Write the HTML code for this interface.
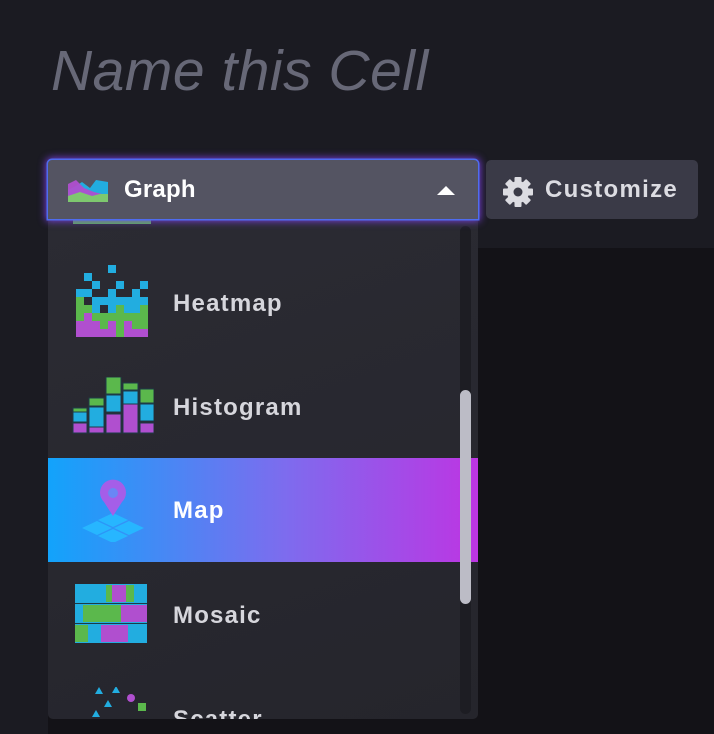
<!DOCTYPE html>
<html><head><style>
body{margin:0;width:714px;height:734px;background:#1b1b22;position:relative;overflow:hidden;font-family:"Liberation Sans",sans-serif}
.title{position:absolute;left:51px;top:38px;font-size:57px;font-style:italic;color:#676877;letter-spacing:0.5px}
.dark{position:absolute;left:48px;top:248px;right:0;bottom:0;background:#131217}
.btn{position:absolute;left:48px;top:160px;width:430px;height:59px;background:#545462;border-radius:4px 4px 0 0;box-shadow:0 0 0 1.5px #4f6cf0,0 0 8px 2px #7a3fe0;box-sizing:border-box}
.btn span{position:absolute;left:76px;top:16px;color:#fff;font-size:24px;font-weight:bold;letter-spacing:0.2px}
.menu{position:absolute;left:48px;top:219px;width:430px;height:500px;background:linear-gradient(160deg,#2b2b33,#25252c);border-radius:0 0 5px 5px;overflow:hidden}
.item{position:absolute;left:0;width:430px;height:104px}
.item span{position:absolute;left:125px;top:39px;color:#d6d6dc;font-size:24px;font-weight:bold;letter-spacing:1.2px}
.sel{background:linear-gradient(90deg,#12a3fb,#7d6cee 55%,#bd35e3)}
.sel span{color:#fff}
.track{position:absolute;left:412px;top:7px;width:11px;height:488px;background:#1d1d23;border-radius:6px}
.thumb{position:absolute;left:412px;top:171px;width:11px;height:214px;background:#bcbcc6;border-radius:6px}
.cust{position:absolute;left:486px;top:160px;width:212px;height:59px;background:#3a3a47;border-radius:5px}
.cust span{position:absolute;left:59px;top:16px;color:#dcdce2;font-size:24px;font-weight:bold;letter-spacing:1.3px}
</style></head><body>
<div class="title">Name this Cell</div>
<div class="dark"></div>
<div class="menu">
 <div style="position:absolute;left:25px;top:0;width:78px;height:5px;background:#5bb84c"></div>
 <div class="item" style="top:32px"><svg style="position:absolute;left:28px;top:14px" width="74" height="74" viewBox="0 0 74 74">
 <g fill="#22ade0"><rect x="32" y="0" width="8" height="8"/><rect x="8" y="8" width="8" height="8"/><rect x="16" y="16" width="8" height="8"/><rect x="40" y="16" width="8" height="8"/><rect x="64" y="16" width="8" height="8"/><rect x="0" y="24" width="16" height="8"/><rect x="32" y="24" width="8" height="8"/><rect x="56" y="24" width="8" height="8"/><rect x="16" y="32" width="48" height="16"/><rect x="64" y="32" width="8" height="8"/></g>
 <rect x="24" y="40" width="8" height="8" fill="#2b2b33"/>
 <g fill="#5bb84c"><rect x="0" y="32" width="8" height="24"/><rect x="8" y="40" width="8" height="8"/><rect x="16" y="48" width="56" height="8"/><rect x="64" y="40" width="8" height="8"/><rect x="40" y="40" width="8" height="32"/><rect x="24" y="56" width="8" height="8"/><rect x="56" y="56" width="16" height="8"/></g>
 <g fill="#b04fcf"><rect x="0" y="64" width="40" height="8"/><rect x="0" y="56" width="24" height="8"/><rect x="48" y="64" width="24" height="8"/><rect x="32" y="56" width="8" height="8"/><rect x="48" y="56" width="8" height="8"/><rect x="8" y="48" width="8" height="8"/></g></svg><span>Heatmap</span></div>
 <div class="item" style="top:136px"><svg style="position:absolute;left:24px;top:22px" width="82" height="60" viewBox="0 0 82 60">
 <g stroke="#1d3b47" stroke-width="1">
 <rect x="1" y="31" width="14" height="4" fill="#5bb84c"/><rect x="1" y="35" width="14" height="10" fill="#22ade0"/><rect x="1" y="46" width="14" height="10" fill="#b04fcf"/>
 <rect x="17" y="21" width="15" height="8" fill="#5bb84c"/><rect x="17" y="30" width="15" height="20" fill="#22ade0"/><rect x="17" y="50" width="15" height="6" fill="#b04fcf"/>
 <rect x="34" y="0" width="15" height="17" fill="#5bb84c"/><rect x="34" y="18" width="15" height="17" fill="#22ade0"/><rect x="34" y="37" width="15" height="19" fill="#b04fcf"/>
 <rect x="51" y="6" width="15" height="7" fill="#5bb84c"/><rect x="51" y="14" width="15" height="13" fill="#22ade0"/><rect x="51" y="27" width="15" height="29" fill="#b04fcf"/>
 <rect x="68" y="12" width="14" height="14" fill="#5bb84c"/><rect x="68" y="27" width="14" height="17" fill="#22ade0"/><rect x="68" y="46" width="14" height="10" fill="#b04fcf"/></g></svg><span>Histogram</span></div>
 <div class="item sel" style="top:239px"><svg style="position:absolute;left:30px;top:20px" width="70" height="64" viewBox="0 0 70 64">
 <g fill="#27b6ff"><polygon points="35,35 50,42 35,49 20,42"/><polygon points="19,43 34,50 19,57 4,50"/><polygon points="51,43 66,50 51,57 36,50"/><polygon points="35,51 50,58 35,65 20,58"/></g>
 <path d="M35 38 L26 24 A13 13 0 1 1 44 24 Z" fill="#a55ee8"/><circle cx="35" cy="15" r="5" fill="#6a86f5"/></svg><span>Map</span></div>
 <div class="item" style="top:344px"><svg style="position:absolute;left:27px;top:21px" width="72" height="60" viewBox="0 0 72 60">
 <rect x="0" y="0" width="72" height="19" fill="#22ade0"/><rect x="31" y="1" width="6" height="17" fill="#5bb84c"/><rect x="37" y="1" width="14" height="17" fill="#b04fcf"/><rect x="51" y="1" width="8" height="17" fill="#5bb84c"/>
 <rect x="0" y="20" width="72" height="19" fill="#22ade0"/><rect x="8" y="21" width="38" height="17" fill="#5bb84c"/><rect x="46" y="21" width="26" height="17" fill="#b04fcf"/>
 <rect x="0" y="40" width="72" height="19" fill="#22ade0"/><rect x="0" y="41" width="13" height="17" fill="#5bb84c"/><rect x="26" y="41" width="27" height="17" fill="#b04fcf"/>
 <g fill="#1d3b47"><rect x="0" y="19" width="72" height="1"/><rect x="0" y="39" width="72" height="1"/></g></svg><span>Mosaic</span></div>
 <div class="item" style="top:448px"><svg style="position:absolute;left:40px;top:20px" width="60" height="40" viewBox="0 0 60 40">
 <g fill="#22ade0"><polygon points="11,0 15,7 7,7"/><polygon points="28,-1 32,6 24,6"/><polygon points="20,13 24,20 16,20"/><polygon points="8,23 12,30 4,30"/></g>
 <circle cx="43" cy="11" r="4" fill="#b04fcf"/><rect x="50" y="16" width="8" height="8" fill="#5bb84c"/></svg><span>Scatter</span></div>
 <div class="track"></div><div class="thumb"></div>
</div>
<div class="btn"><svg style="position:absolute;left:20px;top:16px" width="40" height="28" viewBox="0 0 40 28">
 <polygon points="0,26 0,14 8,10 14,6 22,12 28,4 40,6 40,26" fill="#22ade0"/>
 <polygon points="0,26 0,8 8,4 16,12 26,16 34,18 40,18 40,26" fill="#b04fcf" opacity="0.95"/>
 <polygon points="0,26 0,20 12,16 24,20 32,18 40,18 40,26" fill="#7ec86f"/></svg><span>Graph</span>
 <svg style="position:absolute;left:388px;top:24px" width="20" height="12"><polygon points="10,2 19,11 1,11" fill="#fff"/></svg></div>
<div class="cust"><svg style="position:absolute;left:16px;top:16px" width="32" height="32" viewBox="-16 -16 32 32">
 <g fill="#dcdce2"><circle r="11"/><g id="t"><rect x="-3.5" y="-15" width="7" height="6" rx="1"/></g>
 <use href="#t" transform="rotate(45)"/><use href="#t" transform="rotate(90)"/><use href="#t" transform="rotate(135)"/><use href="#t" transform="rotate(180)"/><use href="#t" transform="rotate(225)"/><use href="#t" transform="rotate(270)"/><use href="#t" transform="rotate(315)"/></g>
 <circle r="4.5" fill="#3a3a47"/></svg><span>Customize</span></div>
</body></html>
